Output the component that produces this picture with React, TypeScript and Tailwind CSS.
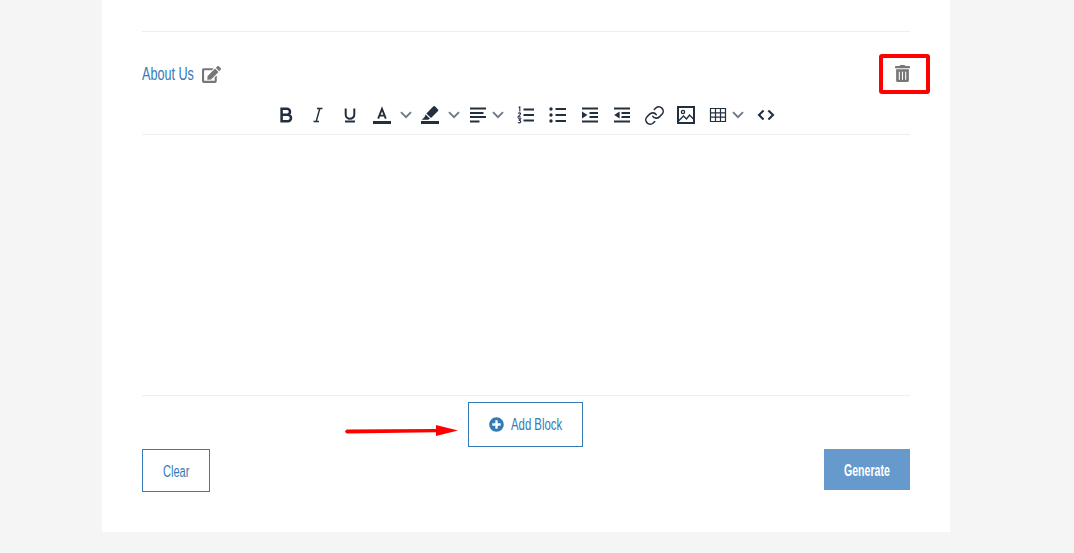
import React from 'react';
import { FaEdit, FaTrashAlt, FaPlusCircle } from 'react-icons/fa';
import { Link as LinkIcon } from 'lucide-react';

const Chevron = () => (
  <svg width="12" height="8" viewBox="0 0 12 8" fill="none" stroke="#6b7785" strokeWidth="1.8">
    <path d="M1 1.2 L6 6.2 L11 1.2" />
  </svg>
);

const Svg: React.FC<{ children: React.ReactNode }> = ({ children }) => (
  <svg width="18" height="18" viewBox="0 0 18 18" fill="none" stroke="#222f3e" strokeWidth="2">
    {children}
  </svg>
);

const lines = (rows: [number, number, number][]) =>
  rows.map(([x1, x2, y]) => <path key={y} d={`M${x1} ${y} H${x2}`} />);

const icons: Record<string, React.ReactNode> = {
  bold: <Svg><path strokeWidth="2.5" d="M4.6 2.8 H10 a3 3 0 0 1 0 6 H4.6 Z M4.6 8.8 H10.8 a3.2 3.2 0 0 1 0 6.4 H4.6 Z" /></Svg>,
  italic: <Svg><path strokeWidth="1.4" d="M8 2.5 H13.5 M4.5 15.5 H10 M10.8 2.5 L7.2 15.5" /></Svg>,
  underline: <Svg><path d="M4.7 2.5 V8.5 a4.3 4.3 0 0 0 8.6 0 V2.5 M4 15.6 H14" /></Svg>,
  color: (
    <Svg>
      <path strokeWidth="1.9" d="M5.2 12.6 L9 2.8 L12.8 12.6 M6.4 9.6 H11.6" />
      <rect x="0" y="15" width="18" height="3" fill="#222f3e" stroke="none" />
    </Svg>
  ),
  highlight: (
    <Svg>
      <path fill="#222f3e" stroke="none" d="M12.2 .6 a1.4 1.4 0 0 1 2 0 l2.6 2.6 a1.4 1.4 0 0 1 0 2 L10 12 L5.4 7.4 Z M4.6 8.4 L9 12.8 L7 13.8 L.8 13.8 L3.6 11 Z" />
      <rect x="0" y="15" width="18" height="3" fill="#222f3e" stroke="none" />
    </Svg>
  ),
  align: <Svg>{lines([[1, 17, 2.5], [1, 14.5, 7], [1, 17, 11], [1, 10.5, 15.5]])}</Svg>,
  ol: (
    <Svg>
      {lines([[6.5, 17, 3.5], [6.5, 17, 9], [6.5, 17, 14.5]])}
      <path strokeWidth="1.1" d="M1.6 1.4 L2.8 .9 V5.6 M1 7.4 Q2.8 6.2 3.6 7.6 Q3.6 8.6 1 11 H3.8 M1 12.8 H3.6 L2.3 14.3 Q4 14.6 3.6 16.2 Q2.4 17.4 1 16.4" />
    </Svg>
  ),
  ul: (
    <Svg>
      {lines([[6.5, 17, 3], [6.5, 17, 9], [6.5, 17, 15]])}
      <circle cx="2" cy="3" r="1.7" fill="#222f3e" stroke="none" />
      <circle cx="2" cy="9" r="1.7" fill="#222f3e" stroke="none" />
      <circle cx="2" cy="15" r="1.7" fill="#222f3e" stroke="none" />
    </Svg>
  ),
  indent: (
    <Svg>
      {lines([[1, 17, 2.5], [8.5, 17, 7], [8.5, 17, 11], [1, 17, 15.5]])}
      <path fill="#222f3e" stroke="none" d="M1 5.4 L6.4 9 L1 12.6 Z" />
    </Svg>
  ),
  outdent: (
    <Svg>
      {lines([[1, 17, 2.5], [8.5, 17, 7], [8.5, 17, 11], [1, 17, 15.5]])}
      <path fill="#222f3e" stroke="none" d="M6.6 5.4 L1.2 9 L6.6 12.6 Z" />
    </Svg>
  ),
  image: (
    <Svg>
      <rect x="1" y="1" width="16" height="16" strokeWidth="2" />
      <circle cx="6" cy="6" r="1.6" strokeWidth="1.4" />
      <path strokeWidth="1.4" d="M1.5 15 L6.5 10 L9.5 13 L12.5 9 L16.5 13" />
    </Svg>
  ),
  table: (
    <Svg>
      <path strokeWidth="1.2" d="M1.5 2.5 H16.5 V15.5 H1.5 Z M1.5 6.8 H16.5 M1.5 11.1 H16.5 M6.5 2.5 V15.5 M11.5 2.5 V15.5" />
    </Svg>
  ),
  code: <Svg><path strokeWidth="2.1" d="M6.6 4.5 L2 9 L6.6 13.5 M11.4 4.5 L16 9 L11.4 13.5" /></Svg>,
};

const Btn: React.FC<{ name: string }> = ({ name }) => (
  <div className="w-8 h-[18px] flex items-center justify-center">{icons[name]}</div>
);

const DropBtn: React.FC<{ name: string; gap: string }> = ({ name, gap }) => (
  <div className={`w-12 h-[18px] flex items-center pl-[7px] ${gap}`}>
    {icons[name]}
    <Chevron />
  </div>
);

// the screenshot's condensed webfont isn't installed, so narrow Liberation Sans instead
const Narrow: React.FC<{ className: string; children: React.ReactNode }> = ({ className, children }) => (
  <span className={`inline-block whitespace-nowrap origin-left text-left ${className}`}>{children}</span>
);

export default function App() {
  return (
    <div className="min-h-[553px] bg-[#f5f5f5] font-['Liberation_Sans',sans-serif]">
      <div className="relative ml-[102px] w-[848px] h-[532px] bg-white px-10">
        <div className="h-8 border-b border-[#eeeeee]" />

        {/* block header */}
        <div className="h-[62px] pt-[31px] flex items-start justify-between">
          <div className="flex items-center gap-2 h-[22px]">
            <Narrow className="w-[52px] scale-x-[0.7] text-[18px] leading-[22px] text-[#337ab7]">About Us</Narrow>
            <FaEdit className="text-[#777777] text-[19px]" />
          </div>
          <FaTrashAlt className="text-[#777777] mt-[2px] w-[15px] h-[17px]" />
        </div>

        {/* toolbar */}
        <div className="mt-[12px] h-[29px] flex justify-center border-b border-[#eeeeee]">
          <Btn name="bold" />
          <Btn name="italic" />
          <Btn name="underline" />
          <DropBtn name="color" gap="gap-[9px]" />
          <DropBtn name="highlight" gap="gap-[9px]" />
          <DropBtn name="align" gap="gap-[5px]" />
          <Btn name="ol" />
          <Btn name="ul" />
          <Btn name="indent" />
          <Btn name="outdent" />
          <div className="w-8 h-[18px] flex items-center justify-center">
            <LinkIcon size={21} color="#222f3e" strokeWidth={1.8} />
          </div>
          <Btn name="image" />
          <DropBtn name="table" gap="gap-[5px]" />
          <Btn name="code" />
        </div>

        {/* editor area */}
        <div className="h-[261px] border-b border-[#eeeeee]" />

        <div className="mt-[6px] flex justify-center pr-[1px]">
          <button className="w-[115px] h-[45px] border border-[#337ab7] flex items-center justify-center gap-[7px] text-[16px] text-[#337ab7]">
            <FaPlusCircle className="text-[15px]" />
            <Narrow className="w-[51px] scale-x-[0.71]">Add Block</Narrow>
          </button>
        </div>

        <div className="mt-[2px] flex items-start justify-between">
          <button className="w-[68px] h-[43px] pt-[2px] border border-[#337ab7] text-[16px] text-[#337ab7]">
            <Narrow className="w-[26px] scale-x-[0.69]">Clear</Narrow>
          </button>
          <button className="w-[86px] h-[41px] pt-[2px] bg-[#6699cc] text-[16px] font-bold text-white">
            <Narrow className="w-[46px] scale-x-[0.66]">Generate</Narrow>
          </button>
        </div>

        {/* annotations over the screenshot */}
        <div className="absolute left-[777px] top-[54px] w-[51px] h-[40px] border-4 border-[#ff0000] rounded-[3px]" />
        <svg className="absolute left-[243px] top-[424px]" width="114" height="14" viewBox="0 0 114 14">
          <path d="M0 7.4 Q1 5.6 2 5.6 L91 5 L91 1 L113 6.4 L91 12 L91 8.2 L2 9.4 Q1 9.4 0 7.4 Z" fill="#ff0000" />
        </svg>
      </div>
    </div>
  );
}
